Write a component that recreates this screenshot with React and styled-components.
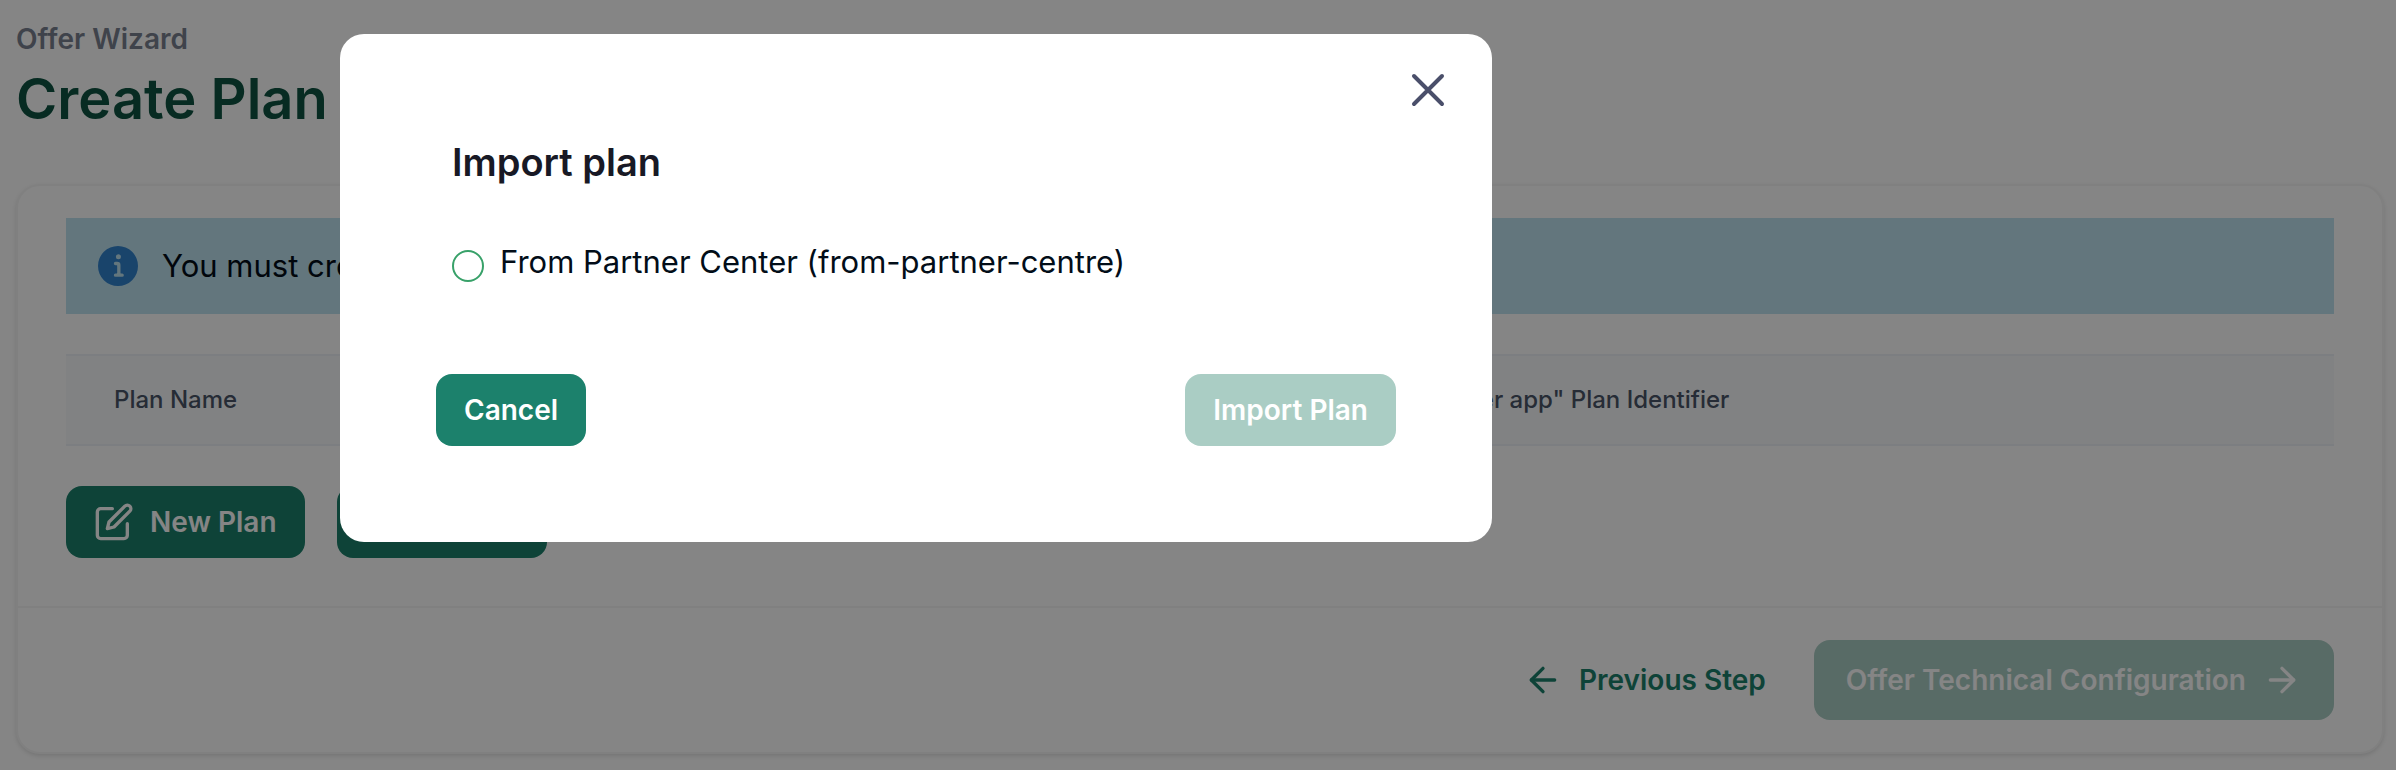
import React, { useEffect, useState } from 'react';
import styled, { createGlobalStyle, ThemeProvider } from 'styled-components';
import { FiArrowLeft, FiArrowRight, FiEdit } from 'react-icons/fi';

const theme = {
  primary: '#1c816c',
  brandDark: '#0f5441',
  link: '#1c816c',
  disabled: '#aacdc4',
  radio: '#38a169',
  text: '#020d18',
  heading: '#181925',
  grey50: '#f7fafc',
  grey100: '#edf2f7',
  grey500: '#7a8190',
  grey600: '#4a5568',
  line: '#f6f6f6',
  info: '#3182ce',
  infoLight: '#bee3f0',
};

const GlobalStyle = createGlobalStyle`
  * {
    box-sizing: border-box;
  }

  body {
    margin: 0;
    background: white;
    color: ${theme.text};
    font-family: Inter, 'Liberation Sans', sans-serif;
    font-size: 31px;
    line-height: 48px;
  }
`;

const StyledPage = styled.main`
  padding: 16px 12px 16px 16px;
`;

const StyledSubtitle = styled.p`
  margin: 0;
  font-size: 28px;
  font-weight: 600;
  line-height: 46px;
  color: ${({ theme }) => theme.grey500};
`;

const StyledTitle = styled.h1`
  margin: 0 0 48px;
  font-size: 56px;
  font-weight: 600;
  line-height: 74px;
  color: ${({ theme }) => theme.brandDark};
`;

const StyledCard = styled.section`
  border: 2px solid ${({ theme }) => theme.line};
  border-radius: 24px;
  background: white;
  box-shadow: 0 2px 4px rgba(0, 0, 0, 0.12);
`;

const StyledCardBody = styled.div`
  padding: 32px 48px 48px;
`;

const StyledCardFooter = styled.footer`
  display: flex;
  justify-content: flex-end;
  align-items: center;
  gap: 16px;
  padding: 32px 48px;
  border-top: 2px solid ${({ theme }) => theme.line};
`;

const StyledAlert = styled.div`
  display: flex;
  align-items: center;
  gap: 24px;
  padding: 24px 32px;
  margin-bottom: 40px;
  background: ${({ theme }) => theme.infoLight};

  svg {
    width: 40px;
    height: 40px;
    color: ${({ theme }) => theme.info};
  }
`;

const StyledTable = styled.table`
  width: 100%;
  margin-bottom: 40px;
  border-collapse: collapse;
  table-layout: fixed;
`;

const StyledTh = styled.th`
  width: ${({ $width }) => $width};
  height: 90px;
  padding: 0 48px;
  border-top: 2px solid ${({ theme }) => theme.grey100};
  border-bottom: 2px solid ${({ theme }) => theme.grey100};
  background: ${({ theme }) => theme.grey50};
  color: ${({ theme }) => theme.grey600};
  font-size: 24px;
  font-weight: 500;
  line-height: 32px;
  text-align: left;
`;

const StyledActions = styled.div`
  display: flex;
  gap: 32px;
`;

const StyledButton = styled.button`
  display: flex;
  align-items: center;
  justify-content: center;
  gap: 16px;
  height: ${({ $large }) => ($large ? '80px' : '72px')};
  padding: 0 ${({ $large }) => ($large ? '32px' : '28px')};
  border: none;
  border-radius: 16px;
  background: ${({ theme }) => theme.primary};
  color: white;
  font-family: inherit;
  font-size: 28px;
  font-weight: 600;
  line-height: 40px;
  white-space: nowrap;
  cursor: pointer;

  &:disabled {
    background: ${({ theme }) => theme.disabled};
    cursor: not-allowed;
  }

  svg {
    width: 40px;
    height: 40px;
  }
`;

const StyledTextButton = styled(StyledButton)`
  background: transparent;
  color: ${({ theme }) => theme.link};
`;

const StyledOverlay = styled.div`
  position: fixed;
  top: 0;
  left: 0;
  width: 100vw;
  height: 100vh;
  background-color: rgba(0, 0, 0, 0.48);
  z-index: 999;
`;

const StyledModal = styled.div`
  position: fixed;
  top: 34px;
  left: 340px;
  z-index: 1000;
  width: 1152px;
  max-width: calc(100vw - 340px);
  padding: 32px 40px 96px;
  border-radius: 24px;
  background: white;
`;

const StyledModalHeader = styled.header`
  display: flex;
  justify-content: flex-end;
`;

const StyledCloseButton = styled.button`
  display: flex;
  padding: 0;
  border: none;
  background: transparent;
  color: #4a4f6a;
  cursor: pointer;

  svg {
    width: 48px;
    height: 48px;
  }
`;

const StyledModalTitle = styled.h2`
  margin: 24px 72px 56px;
  font-size: 38px;
  font-weight: 600;
  line-height: 48px;
  color: ${({ theme }) => theme.heading};
`;

const StyledOption = styled.label`
  display: flex;
  align-items: flex-end;
  gap: 16px;
  margin: 0 72px 92px;
  line-height: 40px;
  cursor: pointer;
`;

const StyledRadio = styled.input`
  appearance: none;
  width: 32px;
  height: 32px;
  margin: 0;
  border: 2px solid ${({ theme }) => theme.radio};
  border-radius: 50%;
  background: white;

  &:checked {
    border-width: 10px;
  }
`;

const StyledModalFooter = styled.footer`
  display: flex;
  justify-content: space-between;
  padding: 0 56px;
`;

const InfoIcon = () => (
  <svg viewBox="0 0 24 24" aria-hidden="true">
    <path
      fill="currentColor"
      d="M12,0A12,12,0,1,0,24,12,12.013,12.013,0,0,0,12,0Zm.25,5a1.5,1.5,0,1,1-1.5,1.5A1.5,1.5,0,0,1,12.25,5ZM14.5,18.5h-4a1,1,0,0,1,0-2h.75a.25.25,0,0,0,.25-.25v-4.5a.25.25,0,0,0-.25-.25H10.5a1,1,0,0,1,0-2h1a2,2,0,0,1,2,2v4.75a.25.25,0,0,0,.25.25h.75a1,1,0,1,1,0,2Z"
    />
  </svg>
);

const CloseIcon = () => (
  <svg viewBox="0 0 48 48" aria-hidden="true">
    <path d="M10 10L38 38M38 10L10 38" stroke="currentColor" strokeWidth="4" strokeLinecap="round" />
  </svg>
);

const ImportPlanModal = ({ closeModalFunction }) => {
  const [source, setSource] = useState('');

  useEffect(() => {
    const handleKey = (e) => {
      if (e.key === 'Escape') {
        closeModalFunction();
      }
    };
    document.addEventListener('keydown', handleKey);

    return () => document.removeEventListener('keydown', handleKey);
  }, [closeModalFunction]);

  return (
    <>
      <StyledOverlay onClick={closeModalFunction} />
      <StyledModal role="dialog" aria-modal="true" aria-labelledby="import-title">
        <StyledModalHeader>
          <StyledCloseButton aria-label="Close" onClick={closeModalFunction}>
            <CloseIcon />
          </StyledCloseButton>
        </StyledModalHeader>
        <StyledModalTitle id="import-title">Import plan</StyledModalTitle>
        <StyledOption htmlFor="from-partner-centre">
          <StyledRadio
            type="radio"
            id="from-partner-centre"
            name="source"
            checked={source === 'from-partner-centre'}
            onChange={() => setSource('from-partner-centre')}
          />
          From Partner Center (from-partner-centre)
        </StyledOption>
        <StyledModalFooter>
          <StyledButton onClick={closeModalFunction}>Cancel</StyledButton>
          <StyledButton disabled={!source}>Import Plan</StyledButton>
        </StyledModalFooter>
      </StyledModal>
    </>
  );
};

const App = () => {
  const [isModalOpen, setIsModalOpen] = useState(true);

  return (
    <ThemeProvider theme={theme}>
      <GlobalStyle />
      <StyledPage>
        <StyledSubtitle>Offer Wizard</StyledSubtitle>
        <StyledTitle>Create Plan</StyledTitle>
        <StyledCard>
          <StyledCardBody>
            <StyledAlert role="status">
              <InfoIcon />
              You must create at least one plan
            </StyledAlert>
            <StyledTable>
              <thead>
                <tr>
                  <StyledTh $width="57%">Plan Name</StyledTh>
                  <StyledTh>&quot;Partner app&quot; Plan Identifier</StyledTh>
                </tr>
              </thead>
            </StyledTable>
            <StyledActions>
              <StyledButton>
                <FiEdit />
                New Plan
              </StyledButton>
              <StyledButton onClick={() => setIsModalOpen(true)}>Import Plan</StyledButton>
            </StyledActions>
          </StyledCardBody>
          <StyledCardFooter>
            <StyledTextButton $large>
              <FiArrowLeft />
              Previous Step
            </StyledTextButton>
            <StyledButton $large disabled>
              Offer Technical Configuration
              <FiArrowRight />
            </StyledButton>
          </StyledCardFooter>
        </StyledCard>
      </StyledPage>
      {isModalOpen && <ImportPlanModal closeModalFunction={() => setIsModalOpen(false)} />}
    </ThemeProvider>
  );
};

export default App;
